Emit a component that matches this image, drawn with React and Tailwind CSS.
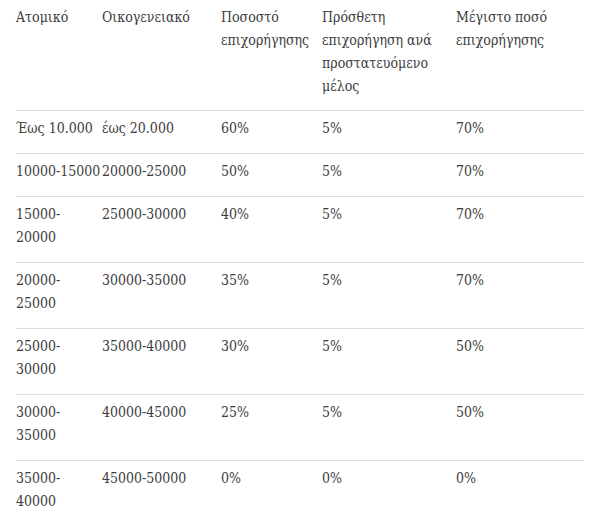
import React from "react";

const header = [
  ["Ατομικό"],
  ["Οικογενειακό"],
  ["Ποσοστό", "επιχορήγησης"],
  ["Πρόσθετη", "επιχορήγηση ανά", "προστατευόμενο", "μέλος"],
  ["Μέγιστο ποσό", "επιχορήγησης"],
];

const rows = [
  [["Έως 10.000"], ["έως 20.000"], ["60%"], ["5%"], ["70%"]],
  [["10000-15000"], ["20000-25000"], ["50%"], ["5%"], ["70%"]],
  [["15000-", "20000"], ["25000-30000"], ["40%"], ["5%"], ["70%"]],
  [["20000-", "25000"], ["30000-35000"], ["35%"], ["5%"], ["70%"]],
  [["25000-", "30000"], ["35000-40000"], ["30%"], ["5%"], ["50%"]],
  [["30000-", "35000"], ["40000-45000"], ["25%"], ["5%"], ["50%"]],
  [["35000-", "40000"], ["45000-50000"], ["0%"], ["0%"], ["0%"]],
];

const widths = ["w-[86px]", "w-[119px]", "w-[101px]", "w-[134px]", "w-[128px]"];

function Cell({ lines, i }) {
  return (
    <div className={`${widths[i]} shrink-0 whitespace-nowrap`}>
      {lines.map((l, k) => (
        <div key={k}>{l}</div>
      ))}
    </div>
  );
}

export default function App() {
  return (
    <div
      className="w-[596px] h-[520px] overflow-hidden bg-white text-[14px] leading-[23px] text-[#3c3c3c] pl-[16px]"
      style={{ fontFamily: '"DejaVu Serif Condensed", "DejaVu Serif", serif' }}
    >
      <div className="w-[568px]">
        <div className="flex pt-[6px] pb-[12px]">
          {header.map((h, i) => (
            <Cell key={i} lines={h} i={i} />
          ))}
        </div>
        {rows.map((r, ri) => (
          <div key={ri} className="flex border-t border-[#dddddd] pt-[6px] pb-[13px]">
            {r.map((c, i) => (
              <Cell key={i} lines={c} i={i} />
            ))}
          </div>
        ))}
      </div>
    </div>
  );
}
